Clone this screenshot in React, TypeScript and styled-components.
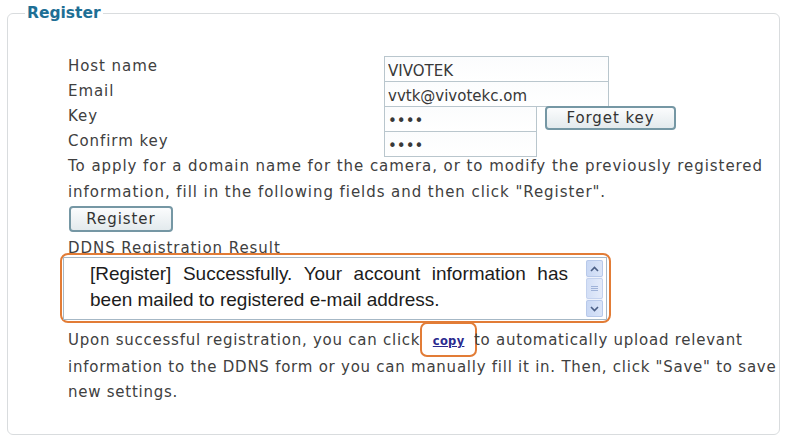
import React from "react";
import styled, { createGlobalStyle, css } from "styled-components";

const GlobalStyle = createGlobalStyle`
  html, body { margin: 0; padding: 0; background: #ffffff; }
  body { font-family: "DejaVu Sans", Verdana, sans-serif; color: #3d3d3d; }
  * { box-sizing: border-box; }
`;

const Fieldset = styled.fieldset`
  margin: 3px 7px 0 7px;
  padding: 0;
  height: 432px;
  border: 1px solid #d9dcde;
  border-radius: 6px;
  min-width: 0;
`;

const Legend = styled.legend`
  margin-left: 17px;
  padding: 0 2px;
  font-family: "DejaVu Sans", Verdana, sans-serif;
  font-weight: bold;
  font-size: 15.5px;
  line-height: 21px;
  color: #1e6f95;
`;

const Content = styled.div`
  padding: 32px 0 0 60px;
  display: flex;
  flex-direction: column;
  align-items: flex-start;
`;

const bodyText = css`
  font-family: "DejaVu Sans", Verdana, sans-serif;
  font-size: 15px;
  letter-spacing: 0.94px;
  color: #404040;
`;

const FormRow = styled.div`
  display: flex;
  align-items: flex-start;
  height: 25px;
`;

const Label = styled.span`
  ${bodyText};
  width: 316px;
  line-height: 21px;
  white-space: nowrap;
`;

const TextInput = styled.input<{ $width: number }>`
  width: ${(p) => p.$width}px;
  height: 26px;
  margin: 0;
  padding: 3px 0 0 3px;
  border: 1px solid #b9c6cd;
  background: linear-gradient(#fbfcfd, #ffffff);
  font-family: "DejaVu Sans", Verdana, sans-serif;
  font-size: 15px;
  color: #383838;
  outline: none;
`;

const Button = styled.button<{ $width: number; $height: number; $gap?: number; $top?: number }>`
  ${bodyText};
  width: ${(p) => p.$width}px;
  height: ${(p) => p.$height}px;
  margin: ${(p) => p.$top ?? 0}px 0 0 ${(p) => p.$gap ?? 0}px;
  padding: 0;
  border: 2px solid #7597a4;
  border-radius: 4px;
  background: linear-gradient(#fbfcfd, #e3eaed);
  line-height: 1;
  color: #333;
  cursor: pointer;
`;

const Paragraph = styled.p<{ $top: number; $spacing?: number }>`
  ${bodyText};
  margin: ${(p) => p.$top}px 0 0 0;
  line-height: 25.5px;
  white-space: nowrap;
  ${(p) => p.$spacing !== undefined && css`letter-spacing: ${p.$spacing}px;`}
`;

const Caption = styled.div`
  ${bodyText};
  margin-top: 5px;
  line-height: 22px;
  white-space: nowrap;
`;

const Highlight = styled.div`
  margin: -6px 0 0 -8px;
  width: 551px;
  height: 70px;
  padding: 2px 2px 1px 1px;
  border: 2px solid #e27c36;
  border-radius: 8px;
  background: #ffffff;
  position: relative;
`;

const ResultBox = styled.div`
  display: flex;
  height: 100%;
  border: 1px solid #a6b8c6;
  background: #ffffff;
`;

const ResultText = styled.div`
  flex: 1;
  padding: 3px 18px 0 26px;
  font-family: "Liberation Sans", Arial, sans-serif;
  font-size: 19px;
  line-height: 26px;
  color: #1c1c1c;
`;

const Line = styled.div<{ $justify?: boolean }>`
  white-space: nowrap;
  ${(p) =>
    p.$justify &&
    css`
      white-space: normal;
      text-align: justify;
      text-align-last: justify;
    `}
`;

const Scrollbar = styled.div`
  width: 17px;
  margin: 2px 3px 2px 0;
  display: flex;
  flex-direction: column;
  background: #eef2fb;
`;

const ScrollArrow = styled.div`
  height: 17px;
  display: flex;
  align-items: center;
  justify-content: center;
  background: linear-gradient(90deg, #c9d8f4, #dbe5f8);
  border: 1px solid #b8c9ea;
  border-radius: 2px;
`;

const ScrollThumb = styled.div`
  flex: 1;
  margin: 1px 0;
  display: flex;
  align-items: center;
  justify-content: center;
  background: linear-gradient(90deg, #d3dff6, #e4ebfa);
  border: 1px solid #c4d2ee;
  border-radius: 2px;
`;

const Grip = styled.div`
  width: 7px;
  height: 5px;
  border-top: 1px solid #9fb2d8;
  border-bottom: 1px solid #9fb2d8;
  position: relative;
  &::after {
    content: "";
    position: absolute;
    left: 0;
    right: 0;
    top: 1px;
    border-top: 1px solid #9fb2d8;
  }
`;

const CopyMark = styled.span`
  padding: 7px 11px 6px 11px;
  margin: 0 -9px 0 -6px;
  border: 2px solid #e27c36;
  border-radius: 7px;
  background: transparent;
`;

const CopyLink = styled.a`
  font-family: "DejaVu Sans", Verdana, sans-serif;
  font-weight: bold;
  font-size: 11.5px;
  letter-spacing: 0.3px;
  color: #2a2a8e;
  text-decoration: underline;
  cursor: pointer;
`;

const Chevron = ({ up }: { up?: boolean }) => (
  <svg width="9" height="6" viewBox="0 0 9 6">
    <path
      d={up ? "M1 5 L4.5 1.5 L8 5" : "M1 1 L4.5 4.5 L8 1"}
      fill="none"
      stroke="#4b5f86"
      strokeWidth="1.6"
    />
  </svg>
);

export default function App() {
  return (
    <>
      <GlobalStyle />
      <Fieldset>
        <Legend>Register</Legend>
        <Content>
          <FormRow>
            <Label>Host name</Label>
            <TextInput $width={225} defaultValue="VIVOTEK" />
          </FormRow>
          <FormRow>
            <Label>Email</Label>
            <TextInput $width={225} defaultValue="vvtk@vivotekc.om" />
          </FormRow>
          <FormRow>
            <Label>Key</Label>
            <TextInput $width={153} type="password" defaultValue="1234" />
            <Button $width={131} $height={24} $gap={8}>
              Forget key
            </Button>
          </FormRow>
          <FormRow>
            <Label>Confirm key</Label>
            <TextInput $width={153} type="password" defaultValue="1234" />
          </FormRow>
          <Paragraph $top={-2}>
            To apply for a domain name for the camera, or to modify the previously registered
            <br />
            information, fill in the following fields and then click "Register".
          </Paragraph>
          <Button $width={104} $height={26} $gap={1} $top={1}>
            Register
          </Button>
          <Caption>DDNS Registration Result</Caption>
          <Highlight>
            <ResultBox>
              <ResultText>
                <Line $justify>[Register] Successfully. Your account information has</Line>
                <Line>been mailed to registered e-mail address.</Line>
              </ResultText>
              <Scrollbar>
                <ScrollArrow>
                  <Chevron up />
                </ScrollArrow>
                <ScrollThumb>
                  <Grip />
                </ScrollThumb>
                <ScrollArrow>
                  <Chevron />
                </ScrollArrow>
              </Scrollbar>
            </ResultBox>
          </Highlight>
          <Paragraph $top={5} $spacing={0.75}>
            Upon successful registration, you can click{" "}
            <CopyMark>
              <CopyLink>copy</CopyLink>
            </CopyMark>{" "}
            to automatically upload relevant
            <br />
            information to the DDNS form or you can manually fill it in. Then, click "Save" to save
            <br />
            new settings.
          </Paragraph>
        </Content>
      </Fieldset>
    </>
  );
}
